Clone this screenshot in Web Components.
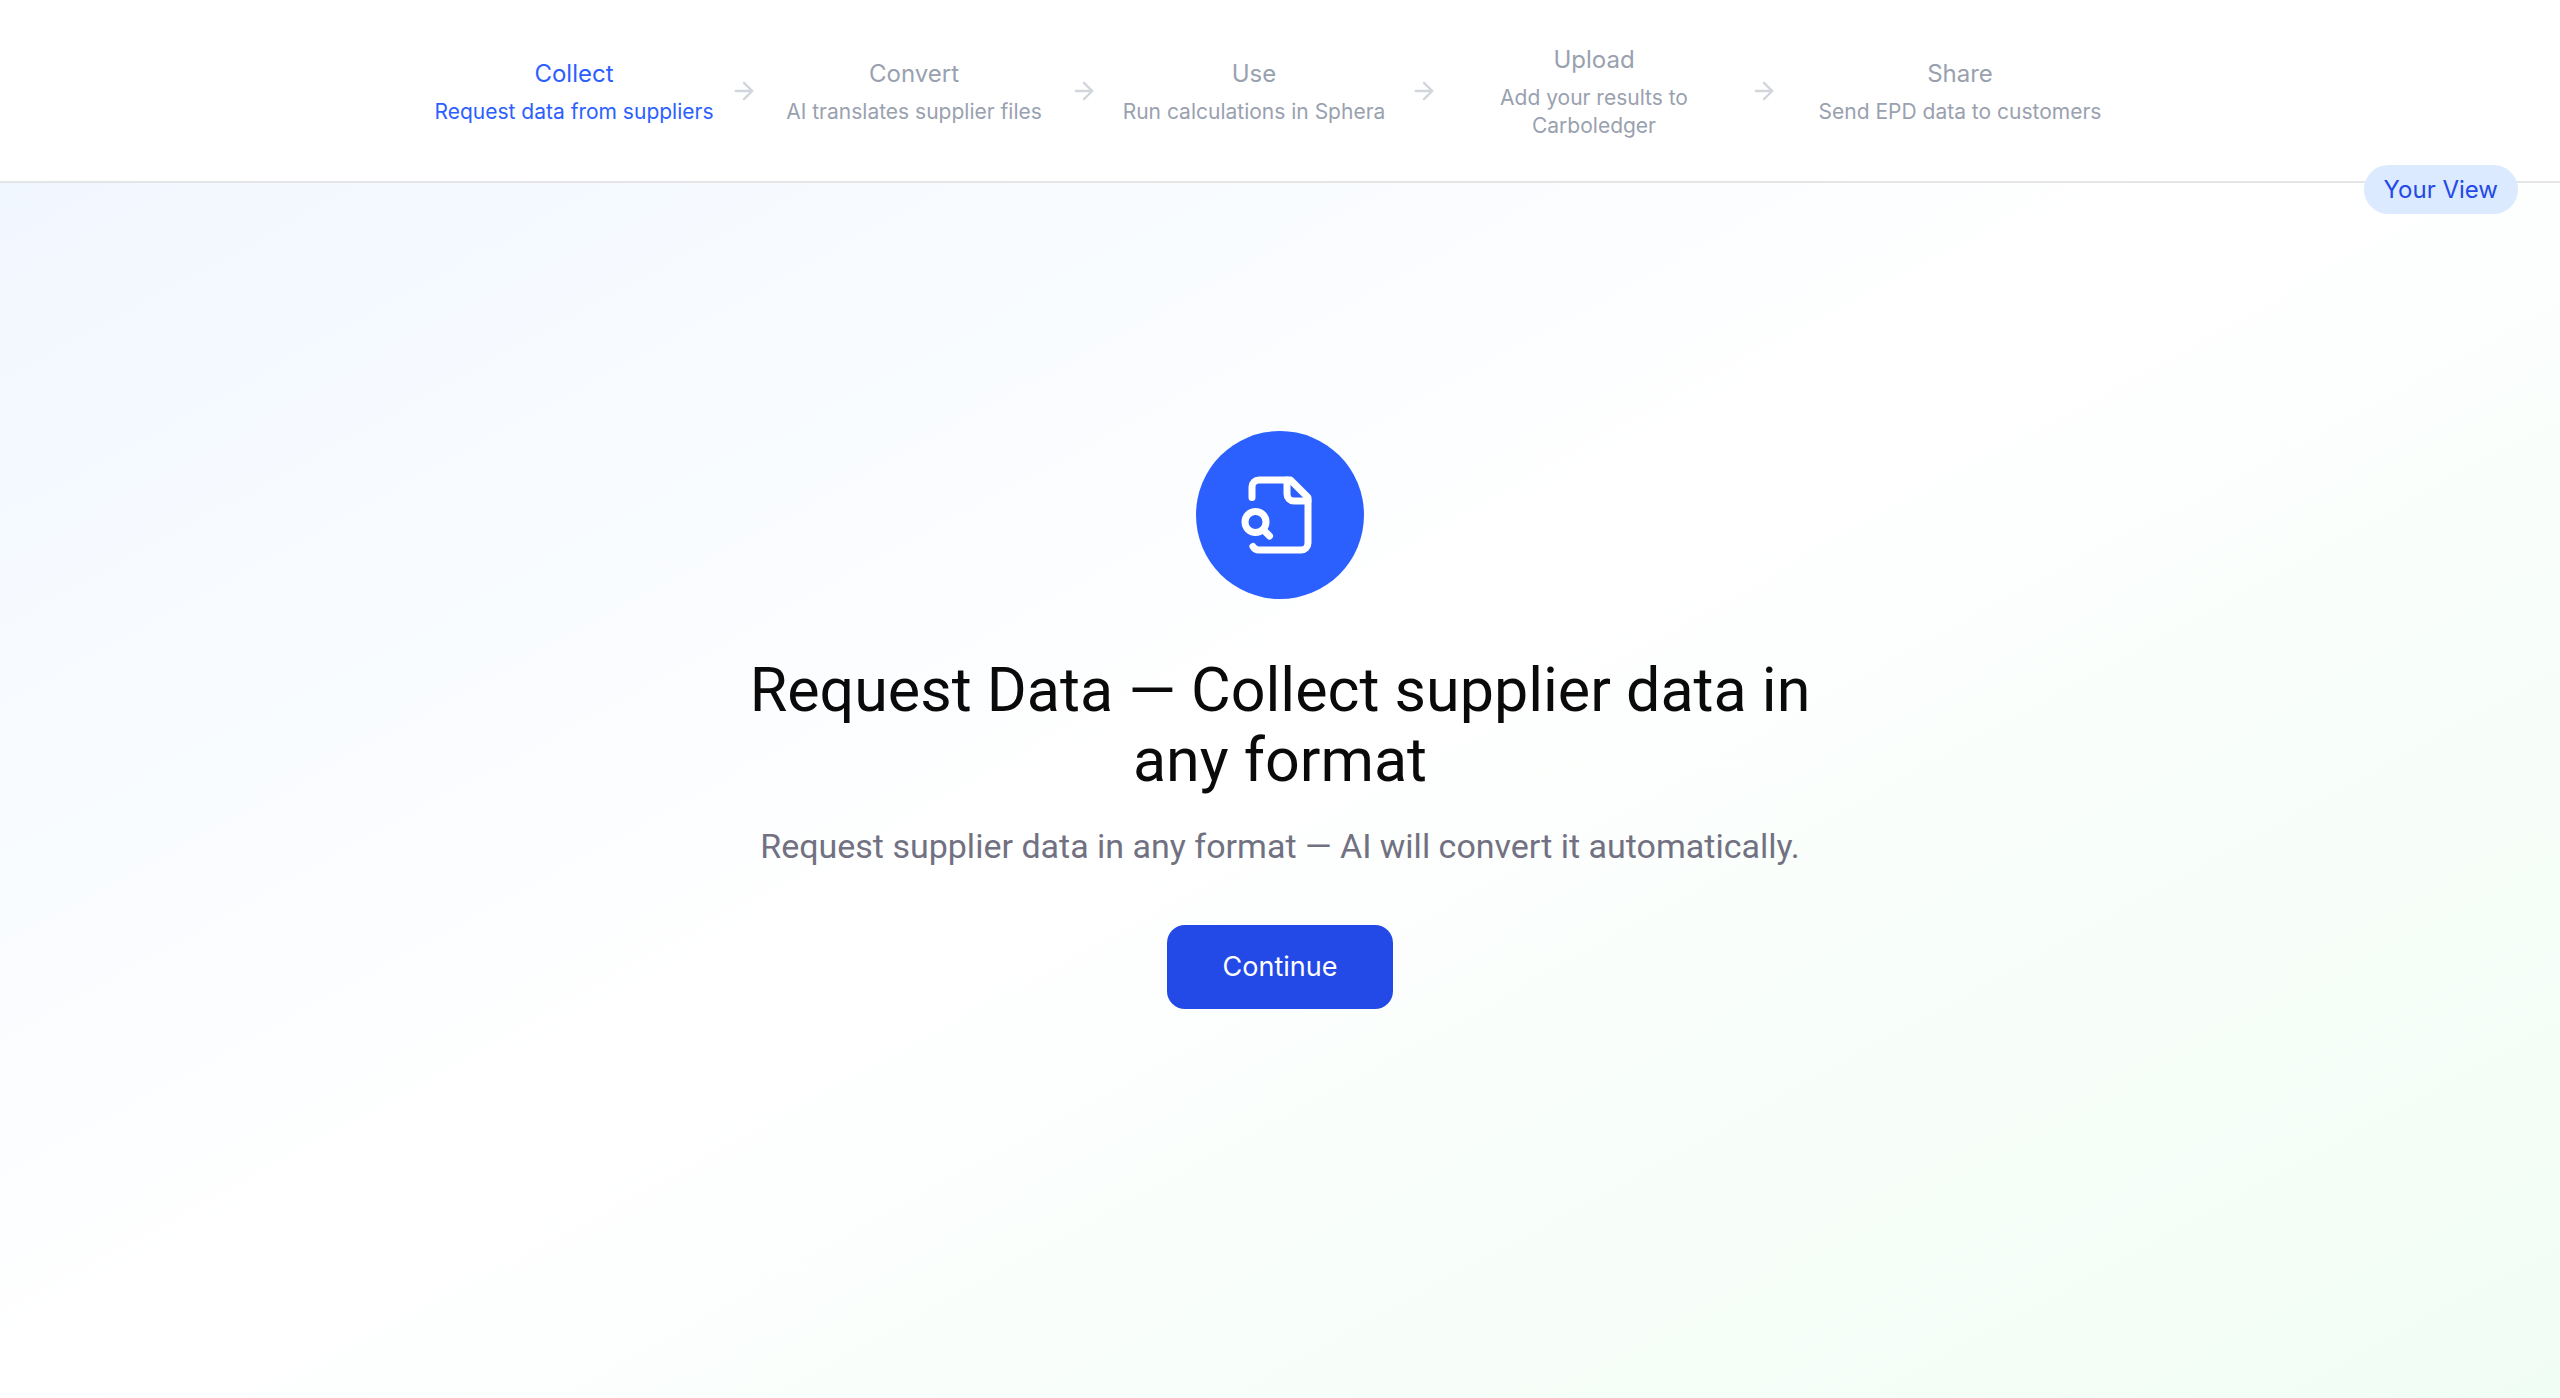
<!DOCTYPE html>
<html lang="en">
<head>
<meta charset="utf-8">
<title>Carboledger</title>
<style>
    body {
        margin: 0;
        font-family: Inter, "Liberation Sans", sans-serif;
        color: #0a0a0a;
    }
</style>
</head>
<body>
<demo-page>
    <step-nav slot="header">
        <step-item active>Collect<span slot="detail">Request data from suppliers</span></step-item>
        <step-item>Convert<span slot="detail">AI translates supplier files</span></step-item>
        <step-item>Use<span slot="detail">Run calculations in Sphera</span></step-item>
        <step-item>Upload<span slot="detail">Add your results to Carboledger</span></step-item>
        <step-item last>Share<span slot="detail">Send EPD data to customers</span></step-item>
        <view-badge slot="badge">Your View</view-badge>
    </step-nav>
    <intro-panel>
        <span slot="title">Request Data — Collect supplier data in any format</span>
        <span slot="text">Request supplier data in any format — AI will convert it automatically.</span>
        <span slot="action">Continue</span>
    </intro-panel>
</demo-page>

<script>
class DemoPage extends HTMLElement {
    constructor() {
        super();
        this.attachShadow({mode: "open"}).innerHTML = `
        <style>
            :host {
                display: flex;
                flex-direction: column;
                min-height: 100vh;
                background: linear-gradient(to bottom right, #eff6ff, #ffffff, #f0fdf4);
            }

            main {
                flex: 1;
                display: flex;
                flex-direction: column;
                align-items: center;
                justify-content: center;
                padding: 42px 42px 184px;
            }
        </style>
        <slot name="header"></slot>
        <main><slot></slot></main>
        `;
    }
}

class StepNav extends HTMLElement {
    constructor() {
        super();
        this.attachShadow({mode: "open"}).innerHTML = `
        <style>
            :host {
                display: block;
                position: relative;
                padding: 42px 42px 41px;
                background-color: white;
                border-bottom: 2px solid #e5e5e5;
            }

            nav {
                display: flex;
                align-items: center;
                max-width: 1700px;
                margin: 0 auto;
            }

            slot[name="badge"]::slotted(*) {
                position: absolute;
                right: 42px;
                bottom: -33px;
            }
        </style>
        <nav aria-label="Steps"><slot></slot></nav>
        <slot name="badge"></slot>
        `;
    }
}

class StepItem extends HTMLElement {
    constructor() {
        super();
        this.attachShadow({mode: "open"}).innerHTML = `
        <style>
            :host {
                display: flex;
                flex: 1 1 0;
                min-width: 0;
                align-items: center;
                color: #99a1af;
            }

            :host([active]) {
                color: #2b60ff;
            }

            .step {
                flex: 1;
                text-align: center;
            }

            .name {
                font-size: 24px;
                line-height: 35px;
                margin-bottom: 7px;
            }

            .detail {
                font-size: 21px;
                line-height: 28px;
            }

            svg {
                flex: none;
                width: 28px;
                height: 28px;
                margin: 0 12px;
                color: #d1d5dc;
            }

            :host([last]) svg {
                display: none;
            }
        </style>
        <div class="step">
            <div class="name"><slot></slot></div>
            <div class="detail"><slot name="detail"></slot></div>
        </div>
        <svg viewBox="0 0 24 24" fill="none" stroke="currentColor" stroke-width="2" stroke-linecap="round" stroke-linejoin="round" aria-hidden="true">
            <path d="M5 12h14"/>
            <path d="m12 5 7 7-7 7"/>
        </svg>
        `;
    }
}

class ViewBadge extends HTMLElement {
    constructor() {
        super();
        this.attachShadow({mode: "open"}).innerHTML = `
        <style>
            :host {
                display: block;
                padding: 7px 20px;
                border-radius: 25px;
                background-color: #dbeafe;
                color: #2349e6;
                font-size: 24px;
                line-height: 35px;
                white-space: nowrap;
            }
        </style>
        <slot></slot>
        `;
    }
}

class IntroPanel extends HTMLElement {
    constructor() {
        super();
        this.attachShadow({mode: "open"}).innerHTML = `
        <style>
            :host {
                display: flex;
                flex-direction: column;
                align-items: center;
                max-width: 1120px;
                text-align: center;
            }

            .icon {
                display: flex;
                align-items: center;
                justify-content: center;
                width: 168px;
                height: 168px;
                border-radius: 50%;
                background-color: #2b60ff;
                color: white;
            }

            svg {
                width: 84px;
                height: 84px;
            }

            h1 {
                margin: 56px 0 28px;
                font-family: Roboto, "Liberation Sans", sans-serif;
                font-size: 61px;
                line-height: 70px;
                font-weight: 400;
            }

            p {
                margin: 0 0 56px;
                color: #717182;
                font-family: Roboto, "Liberation Sans", sans-serif;
                font-size: 34px;
                line-height: 46px;
            }

            button {
                padding: 21px 56px;
                border: 0;
                border-radius: 18px;
                background-color: #2349e6;
                color: white;
                font-family: inherit;
                font-size: 27px;
                line-height: 42px;
                cursor: pointer;
            }

            button:hover {
                background-color: #193cb8;
            }
        </style>
        <div class="icon">
            <svg viewBox="0 0 24 24" fill="none" stroke="currentColor" stroke-width="2" stroke-linecap="round" stroke-linejoin="round" aria-hidden="true">
                <path d="M14 2v4a2 2 0 0 0 2 2h4"/>
                <path d="M4.268 21a2 2 0 0 0 1.727 1H18a2 2 0 0 0 2-2V7l-5-5H6a2 2 0 0 0-2 2v3"/>
                <path d="m9 18-1.5-1.5"/>
                <circle cx="5" cy="14" r="3"/>
            </svg>
        </div>
        <h1><slot name="title"></slot></h1>
        <p><slot name="text"></slot></p>
        <button type="button"><slot name="action"></slot></button>
        `;
    }
}

customElements.define("demo-page", DemoPage);
customElements.define("step-nav", StepNav);
customElements.define("step-item", StepItem);
customElements.define("view-badge", ViewBadge);
customElements.define("intro-panel", IntroPanel);
</script>
</body>
</html>
